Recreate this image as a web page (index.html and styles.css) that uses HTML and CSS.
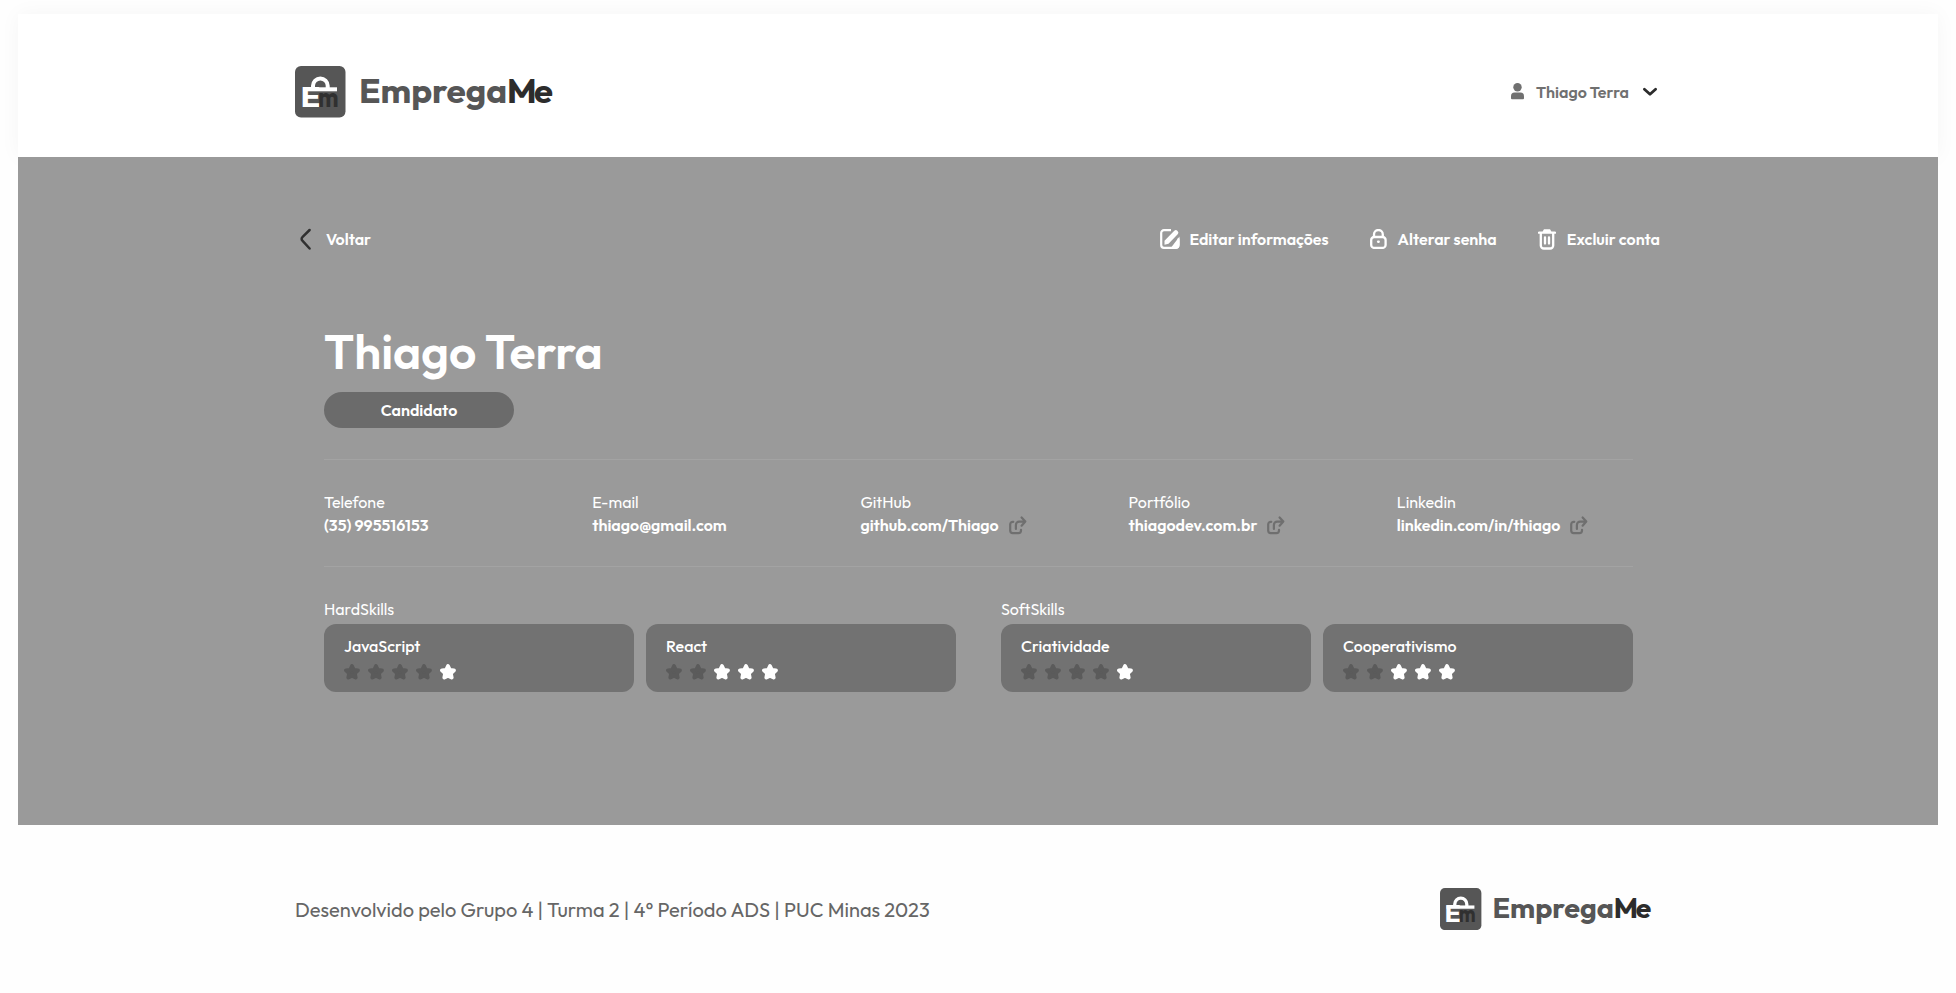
FILE: index.html
```html
<!DOCTYPE html>
<html lang="pt-BR">
<head>
<meta charset="utf-8">
<title>EmpregaMe</title>
<link rel="stylesheet" href="styles.css">
</head>
<body>
<svg class="sprite" aria-hidden="true">
  <symbol id="star" viewBox="0 0 16 16">
    <path d="M8 2l1.760 3.870 4.230.480-3.140 2.880.850 4.370L8 11.700l-3.700 1.900.850-4.370L2.010 6.350l4.230-.480z" fill="currentColor" stroke="currentColor" stroke-width="3.800" stroke-linejoin="round"/>
  </symbol>
  <symbol id="open" viewBox="0 0 20 20">
    <path d="M6.300 6.800H5.800a2.600 2.600 0 0 0-2.600 2.600v6.200a2.600 2.600 0 0 0 2.600 2.600h5.600a2.600 2.600 0 0 0 2.600-2.600v-.8M8.900 14V9.900a3.200 3.200 0 0 1 3.200-3.200h5.700M14.600 2.500l3.700 4.100-3.700 4.100" fill="none" stroke="currentColor" stroke-width="2.200" stroke-linecap="round" stroke-linejoin="round"/>
  </symbol>
</svg>

<header class="header">
  <svg class="logo" viewBox="0 0 260 52">
    <rect width="50.5" height="51.4" rx="6" fill="#565656"/>
    <path d="M18 22v-2.200a7.300 7.300 0 0 1 14.700 0V22" fill="none" stroke="#fff" stroke-width="4"/>
    <rect x="8" y="21.300" width="34" height="4" fill="#fff"/>
    <text class="mark" x="5.500" y="41" textLength="20" lengthAdjust="spacingAndGlyphs" fill="#fff">E</text>
    <text class="mark" x="23" y="41" textLength="20.500" lengthAdjust="spacingAndGlyphs" fill="#303030">m</text>
    <text class="word" x="64" y="37" textLength="148.200" lengthAdjust="spacingAndGlyphs" fill="#565656">Emprega</text>
    <text class="word" x="212" y="37" textLength="46" lengthAdjust="spacing" fill="#2c2c2c">Me</text>
  </svg>
  <div class="user">
    <svg width="13" height="17" viewBox="0 0 13 17"><circle cx="6.500" cy="4.300" r="4.200" fill="#707070"/><path d="M0 15.200V13.200a3.600 3.600 0 0 1 3.600-3.600h5.800a3.600 3.600 0 0 1 3.600 3.600v2a1 1 0 0 1-1 1H1a1 1 0 0 1-1-1z" fill="#707070"/></svg>
    <span class="user-name">Thiago Terra</span>
    <svg width="16" height="10" viewBox="0 0 16 10"><path d="M2.400 2.200 8 7.300l5.600-5.100" fill="none" stroke="#2c2c2c" stroke-width="2.800" stroke-linecap="round" stroke-linejoin="round"/></svg>
  </div>
</header>

<main class="main">
  <nav class="toolbar">
    <a class="back">
      <svg width="14" height="24" viewBox="0 0 14 24"><path d="M10.600 3 3.400 10.200a2.400 2.400 0 0 0 0 3.500L10.600 21.500" fill="none" stroke="#303030" stroke-width="2.500" stroke-linecap="round"/></svg>
      <span>Voltar</span>
    </a>
    <div class="actions">
      <a class="action edit">
        <svg width="20" height="20" viewBox="0 0 20 20"><path d="M11 1.200H4A2.800 2.800 0 0 0 1.200 4v12A2.800 2.800 0 0 0 4 18.800h11.500a3 3 0 0 0 3-3V9.500" fill="none" stroke="#fff" stroke-width="2.200"/><path d="M4.500 15.700v-4L14.300 1.800a2.100 2.100 0 0 1 3 0l.4.400a2.100 2.100 0 0 1 0 3L8.500 14.800zM19.500 7.500v8.500a4 4 0 0 1-4 4H10z" fill="#fff"/></svg>
        <span>Editar informações</span>
      </a>
      <a class="action">
        <svg width="17" height="20" viewBox="0 0 17 20"><rect x="1.200" y="8" width="14.400" height="10.900" rx="3" fill="none" stroke="#fff" stroke-width="2.300"/><path d="M4 8V5.400a4.400 4.400 0 0 1 8.800 0V8" fill="none" stroke="#fff" stroke-width="2.300"/><rect x="6.900" y="11.600" width="3" height="2.300" rx="1.100" fill="#fff"/></svg>
        <span>Alterar senha</span>
      </a>
      <a class="action">
        <svg width="18" height="21" viewBox="0 0 18 21"><path d="M1 3.700h16M5.600 3l1-1.600h4.800l1 1.600M2.800 4v12.500a3 3 0 0 0 3 3h6.400a3 3 0 0 0 3-3V4M7 8.500v6M11 8.500v6" fill="none" stroke="#fff" stroke-width="2.300" stroke-linecap="round"/></svg>
        <span>Excluir conta</span>
      </a>
    </div>
  </nav>

  <section class="profile">
    <h1 class="name">Thiago Terra</h1>
    <div class="role">Candidato</div>

    <div class="contacts">
      <div class="contact"><span class="label">Telefone</span><span class="value">(35) 995516153</span></div>
      <div class="contact"><span class="label">E-mail</span><span class="value">thiago@gmail.com</span></div>
      <div class="contact"><span class="label">GitHub</span><span class="value">github.com/Thiago<svg class="open"><use href="#open"/></svg></span></div>
      <div class="contact"><span class="label">Portfólio</span><span class="value">thiagodev.com.br<svg class="open"><use href="#open"/></svg></span></div>
      <div class="contact"><span class="label">Linkedin</span><span class="value">linkedin.com/in/thiago<svg class="open"><use href="#open"/></svg></span></div>
    </div>

    <div class="skills">
      <div class="group">
        <span class="label">HardSkills</span>
        <div class="cards">
          <div class="card"><span class="skill">JavaScript</span><div class="stars"><svg><use href="#star"/></svg><svg><use href="#star"/></svg><svg><use href="#star"/></svg><svg><use href="#star"/></svg><svg class="on"><use href="#star"/></svg></div></div>
          <div class="card"><span class="skill">React</span><div class="stars"><svg><use href="#star"/></svg><svg><use href="#star"/></svg><svg class="on"><use href="#star"/></svg><svg class="on"><use href="#star"/></svg><svg class="on"><use href="#star"/></svg></div></div>
        </div>
      </div>
      <div class="group">
        <span class="label">SoftSkills</span>
        <div class="cards">
          <div class="card"><span class="skill">Criatividade</span><div class="stars"><svg><use href="#star"/></svg><svg><use href="#star"/></svg><svg><use href="#star"/></svg><svg><use href="#star"/></svg><svg class="on"><use href="#star"/></svg></div></div>
          <div class="card"><span class="skill">Cooperativismo</span><div class="stars"><svg><use href="#star"/></svg><svg><use href="#star"/></svg><svg class="on"><use href="#star"/></svg><svg class="on"><use href="#star"/></svg><svg class="on"><use href="#star"/></svg></div></div>
        </div>
      </div>
    </div>
  </section>
</main>

<footer class="footer">
  <p class="credits">Desenvolvido pelo Grupo 4 | Turma 2 | 4° Período ADS | PUC Minas 2023</p>
  <svg class="logo logo-small" viewBox="0 0 260 52">
    <rect width="50.5" height="51.4" rx="6" fill="#565656"/>
    <path d="M18 22v-2.200a7.300 7.300 0 0 1 14.700 0V22" fill="none" stroke="#fff" stroke-width="4"/>
    <rect x="8" y="21.300" width="34" height="4" fill="#fff"/>
    <text class="mark" x="5.500" y="41" textLength="20" lengthAdjust="spacingAndGlyphs" fill="#fff">E</text>
    <text class="mark" x="23" y="41" textLength="20.500" lengthAdjust="spacingAndGlyphs" fill="#303030">m</text>
    <text class="word" x="64" y="37" textLength="148.200" lengthAdjust="spacingAndGlyphs" fill="#565656">Emprega</text>
    <text class="word" x="212" y="37" textLength="46" lengthAdjust="spacing" fill="#2c2c2c">Me</text>
  </svg>
</footer>
</body>
</html>
```
FILE: styles.css
```css
* { box-sizing: border-box; }
html { overflow: hidden; }
body {
  margin: 0;
  padding: 14px 18px 0;
  background: #fefefe;
  font: 16px/20px Outfit, Lato, sans-serif;
}
svg { display: block; flex: none; }
.sprite { position: absolute; width: 0; height: 0; }

.header {
  display: flex;
  align-items: center;
  justify-content: space-between;
  height: 143px;
  padding: 12px 280px 0 277px;
  background: #fff;
  box-shadow: 0 0 20px rgba(0, 0, 0, .04);
}
.logo { width: 260px; height: 52px; }
.mark { font: 700 28px Outfit, Lato, sans-serif; }
.word { font: 700 34.500px Outfit, Lato, sans-serif; }
.user { display: flex; align-items: center; color: #707070; font-weight: 600; }
.user-name { margin: 0 13px 0 12px; }

.main {
  position: relative;
  height: 668px;
  padding: 70px 277px 0;
  background: #9a9a9a;
  color: #fff;
}
.toolbar { display: flex; justify-content: space-between; height: 24px; font-weight: 600; }
.back { display: flex; align-items: center; gap: 13px; padding-left: 4px; }
.actions { display: flex; gap: 41px; padding-right: 1px; }
.action { display: flex; align-items: center; gap: 11px; }
.edit { gap: 9px; }

.profile { margin: 70px 28px 0 29px; }
.name { margin: 0; font-size: 48px; line-height: 60px; font-weight: 600; }
.role {
  width: 190px;
  margin: 11px 0 31px;
  border-radius: 18px;
  background: #6b6b6b;
  font-weight: 600;
  line-height: 36px;
  text-align: center;
}
.label { font-weight: 400; }
.contacts {
  display: grid;
  grid-template-columns: repeat(5, 1fr);
  column-gap: 32px;
  padding: 32px 0 31px;
  border: solid #a3a3a3;
  border-width: 1px 0;
}
.contact { display: flex; flex-direction: column; gap: 3px; white-space: nowrap; }
.value { display: flex; align-items: center; gap: 8px; font-weight: 600; }
.open { width: 20px; height: 20px; color: #6f6f6f; }

.skills { display: grid; grid-template-columns: 1fr 1fr; gap: 45px; padding-top: 32px; }
.group { display: flex; flex-direction: column; gap: 5px; }
.cards { display: grid; grid-template-columns: 1fr 1fr; gap: 12px; }
.card {
  display: flex;
  flex-direction: column;
  gap: 8px;
  height: 68px;
  padding: 12px 20px;
  border-radius: 12px;
  background: #727272;
}
.skill { font-weight: 500; }
.stars { display: flex; gap: 8px; color: #5b5b5b; }
.stars svg { width: 16px; height: 16px; }
.stars .on { color: #fff; }

.footer {
  display: flex;
  align-items: center;
  justify-content: space-between;
  height: 168px;
  padding: 0 285px 0 277px;
}
.credits { margin: 0; padding-top: 2px; color: #666; font-size: 20px; line-height: 24px; }
.logo-small { width: 213px; height: 42.600px; }
```
